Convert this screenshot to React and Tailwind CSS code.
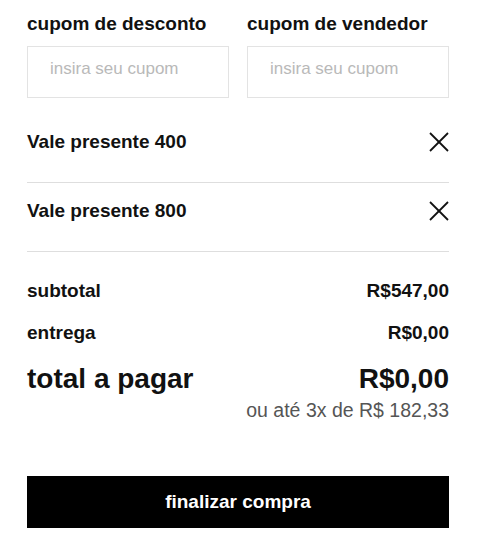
import React from "react";

const CloseIcon = () => (
  <svg width="20" height="20" viewBox="0 0 20 20" fill="none" stroke="#111" strokeWidth="1.8">
    <line x1="1" y1="1" x2="19" y2="19" />
    <line x1="19" y1="1" x2="1" y2="19" />
  </svg>
);

const App = () => {
  const vouchers = ["Vale presente 400", "Vale presente 800"];

  return (
    <div className="min-h-screen bg-white font-['Liberation_Sans',Arial,sans-serif] text-[#111]">
      <div className="w-[422px] ml-[27px] pt-[13px]">
        {/* cupons */}
        <div className="grid grid-cols-2 gap-[18px]">
          <div>
            <p className="text-[19px] leading-[22px] font-bold mb-[11px]">cupom de desconto</p>
            <input placeholder="insira seu cupom" className="w-full h-[52px] border border-[#e3e3e3] pl-[22px] pb-[6px] text-[17px] outline-none placeholder:text-[#b9b9b9]" />
          </div>
          <div>
            <p className="text-[19px] leading-[22px] font-bold mb-[11px]">cupom de vendedor</p>
            <input placeholder="insira seu cupom" className="w-full h-[52px] border border-[#e3e3e3] pl-[22px] pb-[6px] text-[17px] outline-none placeholder:text-[#b9b9b9]" />
          </div>
        </div>

        {/* vales */}
        <div className="mt-[16px]">
          {vouchers.map(v => (
            <div key={v} className="flex justify-between items-center pt-[17px] pb-[29px] border-b border-[#dedede]">
              <span className="text-[19px] leading-[22px] font-bold">{v}</span>
              <button><CloseIcon /></button>
            </div>
          ))}
        </div>

        {/* resumo */}
        <div className="mt-[28px]">
          <div className="flex justify-between text-[19px] leading-[22px] font-bold">
            <span>subtotal</span><span>R$547,00</span>
          </div>
          <div className="flex justify-between text-[19px] leading-[22px] font-bold mt-[20px]">
            <span>entrega</span><span>R$0,00</span>
          </div>
          <div className="flex justify-between text-[28px] leading-[32px] font-bold mt-[19px]">
            <span>total a pagar</span><span>R$0,00</span>
          </div>
          <p className="text-right text-[19.5px] leading-[22px] text-[#555] mt-[4px]">ou até 3x de R$ 182,33</p>
        </div>

        <button className="w-full h-[52px] mt-[55px] bg-black text-white text-[19px] font-bold">finalizar compra</button>
      </div>
    </div>
  );
};

export default App;
